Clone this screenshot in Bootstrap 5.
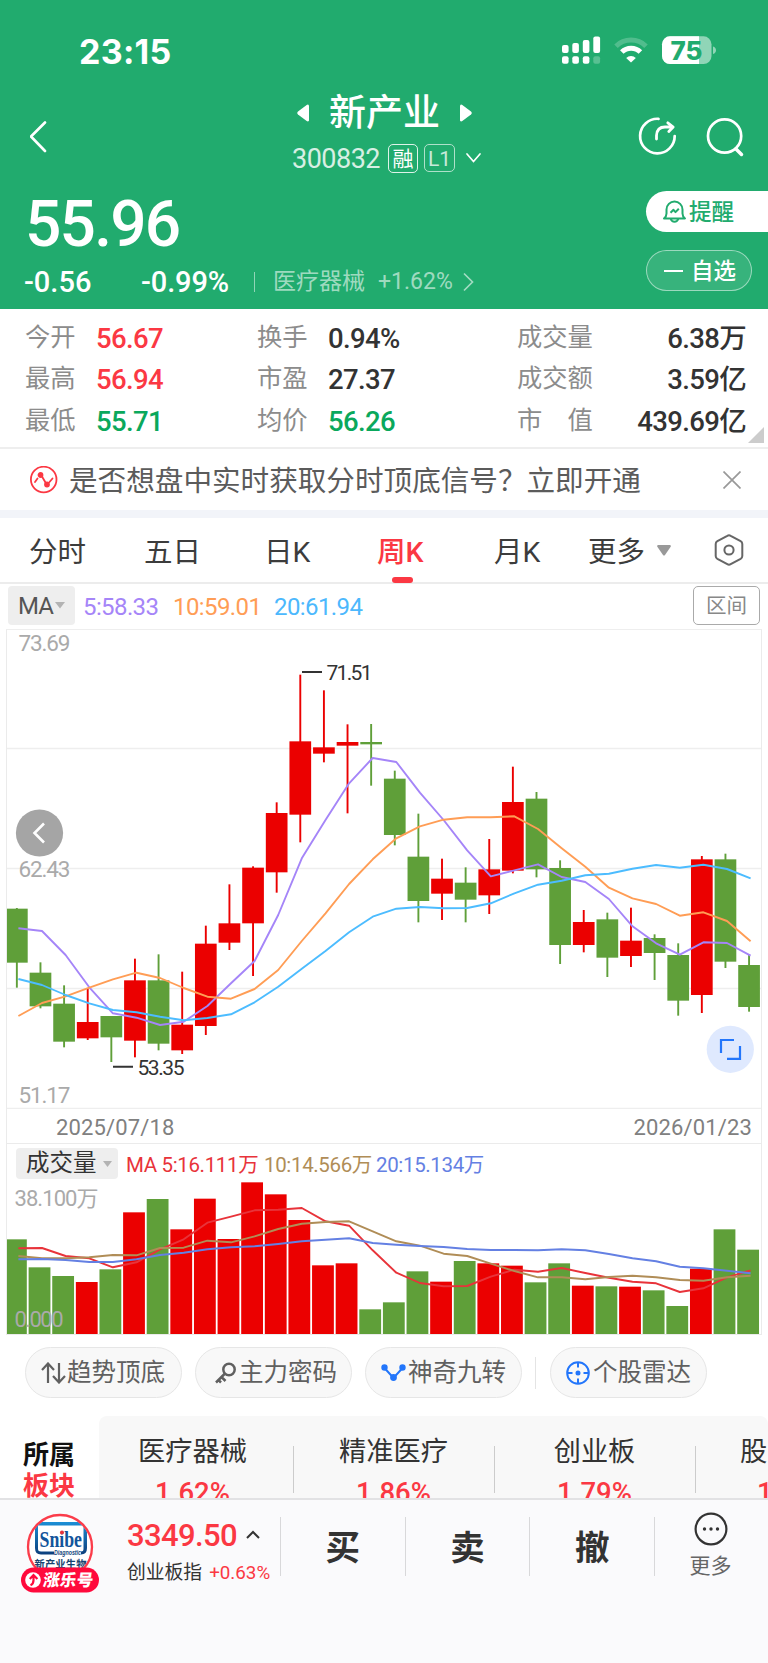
<!DOCTYPE html>
<html lang="zh-CN">
<head>
    <meta charset="UTF-8">
    <meta name="viewport" content="width=device-width, initial-scale=1.0">
    <title>新产业 300832</title>
    <link rel="stylesheet" href="https://cdn.jsdelivr.net/npm/bootstrap@5.3.0/dist/css/bootstrap.min.css">
    <style>
        body { width: 768px; height: 1663px; overflow: hidden; background: #fff; color: #333; font-family: Roboto, "Noto Sans CJK SC", sans-serif; }
        svg { display: block; flex: none; }
        .red { color: #fb3843; }
        .green { color: #0aa85c; }

        .top { height: 309px; background: #21ab6e; color: #fff; }
        .status { height: 70px; padding: 33px 0 0 79px; }
        .clock { font: 700 34px/37px Inter, sans-serif; letter-spacing: .3px; width: 483px; }
        .title-bar { height: 120px; padding-left: 30px; }
        .title-mid { width: 334px; margin-left: 170px; padding-top: 20px; }
        .stock-name { font-size: 37px; line-height: 44px; padding-top: 2px; font-weight: 500; margin: 0 20px 0 20px; }
        .code { font-size: 27px; line-height: 29px; padding-top: 3px; letter-spacing: -.5px; opacity: .82; width: 95px; }
        .tag { height: 29px; border: 1px solid rgba(255,255,255,.85); border-radius: 5px; text-align: center; }
        .quote { height: 119px; }
        .price { font-size: 64px; line-height: 64px; font-weight: 500; letter-spacing: -1.8px; padding-left: 25px; margin-top: 3px; }
        .change { font-size: 29px; line-height: 32px; font-weight: 500; margin-top: 9px; padding-left: 24px; }
        .sector { color: rgba(255,255,255,.58); font-size: 23px; font-weight: 400; }
        .pill { height: 41px; font-size: 22.5px; font-weight: 500; line-height: 41px; }
        .remind { width: 122px; padding-left: 17px; background: #fff; color: #21ab6e; border-radius: 21px 0 0 21px; }
        .watch { width: 106px; padding-left: 17px; margin-top: 18px; background: rgba(255,255,255,.1); border: 1px solid rgba(255,255,255,.5); border-radius: 21px; line-height: 38px; }

        .stats { height: 138px; padding: 8px 22px 0 25px; }
        .stat { height: 41.3px; line-height: 42px; }
        .stat .k { color: #8c8c8c; font-size: 25.3px; line-height: 41px; }
        .stat .v { font-size: 27.5px; font-weight: 500; letter-spacing: -.65px; padding-top: 1px; }
        .fold { right: 4px; bottom: 4px; }

        .promo { height: 63px; border-top: 2px solid #eee; padding: 0 27px 0 30px; color: #5b5b5b; font-size: 28.6px; line-height: 60px; }
        .gap-band { height: 8px; background: #f2f4f9; }
        .periods { height: 66px; border-bottom: 2px solid #ececec; font-size: 28.5px; line-height: 64px; color: #3c3c3c; padding-left: 29px; }
        .periods span { display: block; white-space: nowrap; padding-top: 3px; height: 64px; }
        .periods .on { color: #fb3843; font-weight: 500; position: relative; }
        .periods .on::after { content: ""; position: absolute; left: 15px; bottom: -1px; width: 21px; height: 6px; border-radius: 3px; background: #fb3843; }

        .ma { height: 45px; padding: 2px 8px 4px; font-size: 24px; line-height: 42px; letter-spacing: -.6px; }
        .pick { background: #eee; border-radius: 4px; }
        .range { width: 67px; border: 1px solid #aaa; border-radius: 5px; color: #888; font-size: 20.5px; line-height: 39px; letter-spacing: 0; }
        .kline { margin: 0 6px; border: 1px solid #ebebeb; border-top-color: #eee; height: 706px; }
        .dates { height: 35px; border-bottom: 1px solid #ebebeb; color: #808080; font-size: 22px; line-height: 37px; letter-spacing: .15px; padding: 0 9px 0 49px; }
        .volhead { height: 38px; padding: 4px 0 0 9px; font-size: 20.5px; line-height: 34px; white-space: nowrap; letter-spacing: -.35px; }
        .volhead .pick { width: 102px; height: 31px; font-size: 23.5px; line-height: 31px; letter-spacing: 0; padding-left: 10px; }

        .tools { height: 81px; padding: 12px 0 0 25px; }
        .tool { width: 157px; height: 51px; border: 1px solid #e6e6e6; border-radius: 26px; background: #f8f8f8; color: #606060; font-size: 24.5px; line-height: 51px; padding-left: 15px; }

        .plates { height: 82px; overflow: hidden; }
        .plates-name { width: 99px; padding: 24px 0 0 23px; font-size: 26px; line-height: 31px; font-weight: 700; color: #111; }
        .plate-list { width: 669px; background: #f8f8f8; border-radius: 8px 8px 0 0; overflow: hidden; }
        .plate { flex: none; width: 201px; text-align: center; position: relative; padding: 18px 14px 0 0; font-size: 27.2px; line-height: 36px; color: #333; }
        .plate b { display: block; font-weight: 500; font-size: 27.5px; line-height: 46px; color: #fb3843; }
        .plate::after { content: ""; position: absolute; right: 6px; top: 30px; width: 1px; height: 47px; background: #ccc; }
        .plate.cut { text-align: left; padding-left: 38px; }

        .dock { height: 165px; background: #fafafc; border-top: 2px solid #e2e2e4; }
        .idx { width: 153px; padding-top: 19px; }
        .idx-num { font-size: 31px; line-height: 34px; font-weight: 500; letter-spacing: -.6px; }
        .idx-name { font-size: 18.8px; line-height: 24px; margin-top: 8px; }
        .act { width: 124.7px; height: 59px; margin-top: 17px; border-left: 1px solid #d8d8da; font-size: 34.5px; line-height: 62px; font-weight: 700; text-align: center; }
        .more { width: 111px; height: 76px; border-left: 0; color: #666; font-size: 21px; }
    </style>
</head>
<body>
    <header class="top">
        <div class="status d-flex">
            <div class="clock">23:15</div>
            <svg width="160" height="34" viewBox="562 34 160 34" fill="#fff">
                <rect x="562" y="46" width="6.6" height="8" rx="2"/><rect x="572.3" y="44" width="6.6" height="10" rx="2"/><rect x="582.8" y="41" width="6.6" height="13" rx="2"/><rect x="593.3" y="37.5" width="6.8" height="16.5" rx="2"/>
                <rect x="562" y="57.3" width="6.6" height="7.4" rx="2"/><rect x="572.3" y="57.3" width="6.6" height="7.4" rx="2"/><rect x="582.8" y="57.3" width="6.6" height="7.4" rx="2"/><rect x="593.3" y="57.3" width="6.8" height="7.4" rx="2" opacity=".25"/>
                <g fill="none" stroke="#fff"><path d="M616 47.2a21.5 21.5 0 0 1 30 0" stroke-width="5" opacity=".22"/><path d="M621.8 53a13.2 13.2 0 0 1 18.6 0" stroke-width="5"/></g>
                <path d="M631 63.5l-4.8-4.6a6.8 6.8 0 0 1 9.6 0z"/>
                <rect x="662" y="37.3" width="49.5" height="27.8" rx="8" opacity=".5"/>
                <path d="M670 37.3h29v27.8h-29a8 8 0 0 1-8-8v-11.8a8 8 0 0 1 8-8z"/>
                <path d="M713 47.5q3 1 3 3.8t-3 3.8z" opacity=".5"/>
                <text x="686.5" y="60.500" text-anchor="middle" font-family="Inter, sans-serif" font-size="25.5" font-weight="800" fill="#21ab6e" textLength="32" lengthAdjust="spacingAndGlyphs">75</text>
            </svg>
        </div>
        <div class="title-bar d-flex">
            <svg width="17" height="120" viewBox="30 70 17 120" fill="none" stroke="#fff" stroke-width="2.6" stroke-linecap="round" stroke-linejoin="round"><path d="M45 122.5L31 136.5L45 151"/></svg>
            <div class="title-mid">
                <div class="d-flex align-items-center" style="padding-left: 80px">
                    <svg width="12" height="18" viewBox="0 0 12 18" fill="#fff"><path d="M12 1.5v15q-.8 1.5-2.3.5L1 10.5Q-.5 9 1 7.5L9.7 1q1.5-1 2.3.5z"/></svg>
                    <span class="stock-name">新产业</span>
                    <svg width="12" height="18" viewBox="0 0 12 18" fill="#fff"><path d="M0 1.5v15q.8 1.5 2.3.5L11 10.5q1.5-1.5 0-3L2.3 1Q.8 0 0 1.5z"/></svg>
                </div>
                <div class="d-flex align-items-center" style="padding-left: 75px; margin-top: 6px">
                    <span class="code">300832</span>
                    <span class="tag" style="width: 30px; margin-left: 1px; font-size: 21px; line-height: 28px">融</span>
                    <span class="tag opacity-75" style="width: 31px; height: 28px; margin-left: 6px; font-size: 21px; line-height: 28px">L1</span>
                    <svg class="ms-2" width="22" height="12" viewBox="0 0 22 12" fill="none" stroke="#fff" stroke-width="1.7" stroke-linecap="round"><path d="M4 2L10.5 9.5L17 2"/></svg>
                </div>
            </div>
            <svg width="130" height="120" viewBox="628 70 130 120" style="margin-left: 77px" fill="none" stroke="#fff" stroke-width="2.7" stroke-linecap="round" stroke-linejoin="round">
                <path d="M658.5 118.8A17.3 17.3 0 1 0 674.7 136"/><path d="M656.5 139V135.5Q657 127 665 127H672M667.8 122.8L673.2 127L668.8 131.5" stroke-width="2.8"/>
                <circle cx="724.6" cy="136" r="16.6"/><path d="M736 149L741.5 154.5" stroke-width="3.5"/>
            </svg>
        </div>
        <div class="quote d-flex justify-content-between">
            <div>
                <div class="price">55.96</div>
                <div class="change d-flex align-items-center">
                    <span style="width: 117px">-0.56</span>
                    <span style="width: 113px; letter-spacing: -.1px">-0.99%</span>
                    <span class="sector d-flex align-items-center"><i style="width: 1px; height: 20px; background: rgba(255,255,255,.5); margin-right: 18px"></i>医疗器械<span style="margin-left: 13px">+1.62%</span>
                        <svg width="12" height="20" viewBox="0 0 12 20" style="margin-left: 9px" fill="none" stroke="currentColor" stroke-width="1.7"><path d="M2 1.5L10.5 10L2 18.5"/></svg></span>
                </div>
            </div>
            <div style="width: 122px; padding-top: 1px">
                <div class="pill remind d-flex align-items-center">
                    <svg width="24" height="26" viewBox="0 0 24 26" fill="none" stroke="#21ab6e" stroke-width="2" stroke-linejoin="round"><path d="M1 19.5Q3.5 17.5 3.5 14.5V10.5a8 8 0 0 1 16 0v4q0 3 2.5 5zM7.5 19.5q1.2 3.3 4 3.3t4-3.3M7.5 13.800l3-3 2 2.300 3.300-3.300"/></svg>
                    <span style="margin-left: 2px; padding-top: 2px">提醒</span>
                </div>
                <div class="pill watch d-flex align-items-center">
                    <i style="width: 19px; height: 2px; background: #fff; margin-right: 8px"></i>自选
                </div>
            </div>
        </div>
    </header>

    <section class="stats d-flex position-relative">
        <div style="width: 232px">
            <div class="stat d-flex"><span class="k" style="width: 71px">今开</span><span class="v red">56.67</span></div>
            <div class="stat d-flex"><span class="k" style="width: 71px">最高</span><span class="v red">56.94</span></div>
            <div class="stat d-flex"><span class="k" style="width: 71px">最低</span><span class="v green">55.71</span></div>
        </div>
        <div style="width: 260px">
            <div class="stat d-flex"><span class="k" style="width: 71px">换手</span><span class="v">0.94%</span></div>
            <div class="stat d-flex"><span class="k" style="width: 71px">市盈</span><span class="v">27.37</span></div>
            <div class="stat d-flex"><span class="k" style="width: 71px">均价</span><span class="v green">56.26</span></div>
        </div>
        <div class="flex-grow-1">
            <div class="stat d-flex justify-content-between"><span class="k">成交量</span><span class="v">6.38万</span></div>
            <div class="stat d-flex justify-content-between"><span class="k">成交额</span><span class="v">3.59亿</span></div>
            <div class="stat d-flex justify-content-between"><span class="k">市　值</span><span class="v">439.69亿</span></div>
        </div>
        <svg class="fold position-absolute" width="16" height="16" viewBox="0 0 16 16" fill="#ccc"><path d="M16 0v16H0z"/></svg>
    </section>

    <section class="promo d-flex align-items-center">
        <svg width="28" height="28" viewBox="0 0 28 28" fill="none" stroke="#fb3843" stroke-width="1.8"><circle cx="13.7" cy="13.5" r="12.8"/><path d="M5 16l2.500-3.500M12 10.500l3.500 6M19.500 16l3-3.500" stroke-linecap="round"/><circle cx="10.5" cy="9" r="2" fill="#fb3843"/><circle cx="17" cy="18.500" r="2" fill="#fb3843"/></svg>
        <span class="text-nowrap" style="margin-left: 11px; padding-top: 2px">是否想盘中实时获取分时顶底信号？立即开通</span>
        <svg class="ms-auto" width="18" height="18" viewBox="0 0 18 18" stroke="#999" stroke-width="1.7"><path d="M.5.5l17 17M17.5.5l-17 17"/></svg>
    </section>
    <div class="gap-band"></div>

    <nav class="periods d-flex align-items-center">
        <span style="width: 115px">分时</span>
        <span style="width: 120px">五日</span>
        <span style="width: 113px">日K</span>
        <span class="on" style="width: 117px">周K</span>
        <span style="width: 94px">月K</span>
        <span>更多</span>
        <svg width="14" height="11" viewBox="0 0 14 11" style="margin-left: 12px" fill="#999"><path d="M1 0h12q1.500.5.500 2L8 10q-1 1.200-2 0L.5 2Q-.5.500 1 0z"/></svg>
        <svg width="30" height="32" viewBox="0 0 30 32" style="margin-left: 43px" fill="none" stroke="#666" stroke-width="2"><path d="M13.3 1.800q1.700-1 3.400 0l9.900 5.400q1.700 1 1.700 2.900v11.800q0 1.900-1.700 2.900l-9.900 5.400q-1.700 1-3.400 0l-9.900-5.400q-1.700-1-1.700-2.900V10.100q0-1.900 1.700-2.900z"/><circle cx="15" cy="16" r="4.6"/></svg>
    </nav>

    <div class="ma d-flex">
        <div class="pick d-flex align-items-center" style="width: 67px; padding-left: 10px; margin-right: 8px; letter-spacing: -1px; color: #555">MA
            <svg width="10" height="7" viewBox="0 0 10 7" style="margin-left: 2px" fill="#b3b3b3"><path d="M0 0h10L5 6.5z"/></svg>
        </div>
        <span style="width: 90px; color: #a585f8">5:58.33</span>
        <span style="width: 101px; color: #ff9d55">10:59.01</span>
        <span style="color: #4cb8fd">20:61.94</span>
        <div class="range ms-auto text-center">区间</div>
    </div>

    <section class="kline">
        <svg id="candles" width="754" height="479" viewBox="7 10 754 479">
            <path d="M7 128.5H761M7 248.5H761M7 368.5H761M7 488.5H761" stroke="#eee" stroke-width="1.3"/>
            <g fill="#aaa" font-size="22.5">
                <text x="18.5" y="31" textLength="52">73.69</text>
                <text x="18.5" y="257" textLength="52">62.43</text>
                <text x="18.5" y="483" textLength="52">51.17</text>
            </g>
        </svg>
        <div class="dates d-flex justify-content-between"><span>2025/07/18</span><span>2026/01/23</span></div>
        <div class="volhead d-flex">
            <div class="pick d-flex align-items-center">成交量
                <svg width="9" height="6" viewBox="0 0 9 6" style="margin-left: 6px" fill="#b3b3b3"><path d="M0 0h9L4.5 6z"/></svg>
            </div>
            <span style="width: 138px; margin-left: 8px; color: #e8333a">MA 5:16.111万</span>
            <span style="width: 112px; color: #b08d57">10:14.566万</span>
            <span style="color: #6480e3">20:15.134万</span>
        </div>
        <svg id="volume" width="754" height="153" viewBox="7 82 754 153"></svg>
    </section>

    <section class="tools d-flex">
        <div class="tool d-flex align-items-center">
            <svg width="25" height="22" viewBox="0 0 25 22" fill="none" stroke="#606060" stroke-width="2.2"><path d="M7 21V2M1 8l6-6.5L13 8M18 1v19M12 14l6 6.5 6-6.5"/></svg><span class="text-nowrap" style="margin-left: 1px">趋势顶底</span>
        </div>
        <div class="tool d-flex align-items-center" style="margin-left: 13px; padding-left: 19px">
            <svg width="22" height="22" viewBox="0 0 22 22" fill="none" stroke="#606060" stroke-width="2.5"><circle cx="14" cy="7.5" r="5.7"/><path d="M10 11.500L1 20.500M6.500 15l4 4M3.500 18l2.500 2.500"/></svg><span class="text-nowrap" style="margin-left: 2px">主力密码</span>
        </div>
        <div class="tool d-flex align-items-center" style="margin-left: 13px">
            <svg width="25" height="18" viewBox="0 0 25 18" fill="#2376fb" stroke="#2376fb" stroke-width="2"><path d="M3.500 4l9 10 9-10" fill="none"/><circle cx="3.500" cy="3.500" r="2.200"/><circle cx="12.500" cy="13.500" r="2.400"/><circle cx="21.500" cy="3.500" r="2.200"/></svg><span class="text-nowrap" style="margin-left: 2px">神奇九转</span>
        </div>
        <i style="width: 1px; height: 32px; margin: 10px 14px 0 13px; background: #e4e4e4"></i>
        <div class="tool d-flex align-items-center">
            <svg width="24" height="24" viewBox="0 0 24 24" fill="none" stroke="#2376fb" stroke-width="2"><circle cx="12" cy="12" r="10.8"/><path d="M12 1v5.500M12 17.500V23M1 12h5.500M17.500 12H23"/><circle cx="12" cy="12" r="1.5" fill="#2376fb"/></svg><span class="text-nowrap" style="margin-left: 3px">个股雷达</span>
        </div>
    </section>

    <section class="plates d-flex">
        <div class="plates-name">所属<br><span class="red">板块</span></div>
        <div class="plate-list d-flex">
            <div class="plate">医疗器械<b>1.62%</b></div>
            <div class="plate">精准医疗<b>1.86%</b></div>
            <div class="plate">创业板<b>1.79%</b></div>
            <div class="plate cut">股<b style="padding-left: 17px">1</b></div>
        </div>
    </section>

    <footer class="dock d-flex">
        <svg width="127" height="110" viewBox="0 1500 127 110">
            <defs>
                <clipPath id="round"><circle cx="60" cy="1547" r="31"/></clipPath>
                <linearGradient id="blue" x1="0" x2="0" y1="0" y2="1"><stop offset="0" stop-color="#1c8fd6"/><stop offset="1" stop-color="#0c3f7c"/></linearGradient>
            </defs>
            <circle cx="60" cy="1547" r="31" fill="#fff"/>
            <g clip-path="url(#round)">
                <path d="M35 1522H87V1525.5H38V1549Q38 1551.5 41 1551.5H54V1554.5H41Q35 1554.5 35 1548zM83.5 1525H87V1548Q87 1554.5 81 1554.5V1551.5Q83.5 1551.5 83.5 1549z" fill="url(#blue)"/>
                <text x="39.5" y="1547" font-family="Liberation Serif, serif" font-size="24" font-weight="700" fill="#13559b" textLength="42.5" lengthAdjust="spacingAndGlyphs">Snibe</text>
                <circle cx="62" cy="1532.5" r="2" fill="#e8333a"/>
                <text x="54" y="1554.5" font-family="Liberation Sans, sans-serif" font-size="6.8" font-weight="700" font-style="italic" fill="#164a80" textLength="27" lengthAdjust="spacingAndGlyphs">Diagnostic</text>
                <text x="34.5" y="1567.5" font-size="10.3" font-weight="700" fill="#15436f" textLength="52">新产业生物</text>
            </g>
            <circle cx="60" cy="1547" r="32" fill="none" stroke="#fb3c4a" stroke-width="2.3"/>
            <rect x="21" y="1567.5" width="78" height="25" rx="12.5" fill="#ff0a3c"/>
            <circle cx="33" cy="1580" r="7.8" fill="#fff"/>
            <path d="M30.500 1585.300q3-1.300 3-5v-4.500M29.800 1579l3.700-4 3.900 4" fill="none" stroke="#ff0a3c" stroke-width="2.2"/>
            <text x="0" y="0" transform="translate(42.5 1586) skewX(-8)" font-size="16.5" font-weight="900" fill="#fff" textLength="50">涨乐号</text>
        </svg>
        <div class="idx">
            <div class="idx-num red d-flex align-items-center">3349.50
                <svg width="14" height="9" viewBox="0 0 14 9" style="margin-left: 9px; margin-bottom: 3px" fill="none" stroke="#333" stroke-width="2"><path d="M1 8l6-6 6 6"/></svg>
            </div>
            <div class="idx-name text-nowrap">创业板指<span class="red" style="margin-left: 7px">+0.63%</span></div>
        </div>
        <div class="act">买</div>
        <div class="act">卖</div>
        <div class="act">撤</div>
        <div style="border-left: 1px solid #d8d8da; height: 59px; margin-top: 17px"></div>
        <div class="more text-center" style="padding-top: 12px">
            <svg class="mx-auto" width="34" height="34" viewBox="0 0 34 34" fill="#333"><circle cx="17" cy="17" r="15.4" fill="none" stroke="#333" stroke-width="2.2"/><circle cx="10.5" cy="17" r="1.7"/><circle cx="17" cy="17" r="1.7"/><circle cx="23.5" cy="17" r="1.7"/></svg>
            <div style="margin-top: 5px">更多</div>
        </div>
    </footer>

    <script src="https://cdn.jsdelivr.net/npm/bootstrap@5.3.0/dist/js/bootstrap.bundle.min.js"></script>
    <script>
        // heights are in thirds of a pixel
        const step = 23.62;
        const RED = "#eb0000";
        const GREEN = "#5f9f39";

        // colour, body top, body bottom, high, low
        const weeks = [
            ["g", 866, 1028, 864, 1103], ["g", 1058, 1159, 1027, 1165], ["g", 1151, 1265, 1096, 1282], ["r", 1206, 1255, 1105, 1260],
            ["g", 1188, 1252, 1188, 1326], ["r", 1081, 1262, 1016, 1312], ["g", 1081, 1271, 1003, 1291], ["r", 1214, 1291, 1055, 1302],
            ["r", 971, 1218, 917, 1245], ["r", 910, 968, 793, 990], ["r", 743, 910, 739, 1068], ["r", 579, 757, 547, 818],
            ["r", 364, 584, 164, 667], ["r", 382, 401, 211, 427], ["r", 366, 377, 313, 580], ["g", 366, 373, 312, 497],
            ["g", 476, 645, 452, 676], ["g", 710, 843, 581, 907], ["r", 776, 821, 716, 900], ["g", 788, 839, 742, 907],
            ["r", 748, 826, 657, 882], ["r", 546, 752, 440, 760], ["g", 536, 748, 516, 772], ["g", 744, 975, 721, 1032],
            ["r", 906, 975, 870, 997], ["g", 898, 1013, 878, 1071], ["r", 962, 1008, 863, 1041], ["g", 954, 999, 943, 1080],
            ["g", 1005, 1142, 970, 1187], ["r", 718, 1125, 708, 1179], ["g", 718, 1025, 701, 1044], ["g", 1035, 1161, 1005, 1175]
        ];
        const volumes = [418, 502, 528, 546, 508, 337, 297, 388, 296, 417, 247, 283, 360, 496, 490, 628, 607, 514, 545, 483, 490, 497, 547, 490, 557, 559, 560, 571, 618, 506, 388, 449];

        const priceLines = {
            "#a585f8": [925, 933, 1005, 1102, 1180, 1193, 1215, 1205, 1158, 1090, 1023, 885, 715, 600, 490, 414, 426, 518, 600, 691, 769, 751, 733, 771, 786, 837, 919, 970, 1004, 967, 969, 1007],
            "#ff9d55": [1188, 1149, 1129, 1103, 1078, 1058, 1074, 1104, 1130, 1136, 1107, 1050, 963, 880, 792, 718, 655, 619, 599, 592, 592, 589, 627, 685, 740, 803, 835, 852, 887, 877, 903, 964],
            "#4cbcff": [1077, 1095, 1125, 1150, 1170, 1177, 1190, 1201, 1194, 1183, 1147, 1100, 1046, 993, 937, 890, 866, 861, 865, 864, 850, 820, 794, 782, 766, 761, 746, 735, 743, 734, 747, 775]
        };
        const volumeLines = {
            "#e8333a": [445, 444, 468, 475, 502, 487, 448, 418, 368, 350, 331, 329, 324, 364, 377, 451, 518, 549, 559, 558, 530, 509, 515, 504, 519, 533, 545, 550, 576, 565, 532, 511],
            "#b08d57": [468, 475, 475, 472, 465, 466, 444, 443, 422, 427, 409, 387, 371, 366, 364, 394, 424, 437, 461, 468, 491, 513, 532, 532, 538, 531, 527, 532, 540, 542, 532, 527],
            "#6480e3": [478, 477, 480, 486, 486, 478, 465, 458, 448, 442, 439, 432, 424, 419, 415, 429, 434, 438, 441, 447, 450, 450, 451, 448, 451, 462, 475, 484, 500, 505, 512, 520]
        };

        function drawLines(lines) {
            let out = "";
            for (const color in lines) {
                const points = lines[color].map((v, i) => `${(18.4 + i * step).toFixed(1)},${(v / 3).toFixed(1)}`).join(" ");
                out += `<polyline points="${points}" fill="none" stroke="${color}" stroke-width="1.9" stroke-linejoin="round"/>`;
            }
            return out;
        }

        let html = "";
        weeks.forEach(([c, top, bottom, high, low], i) => {
            const x = 16.8 + i * step;
            const fill = c === "r" ? RED : GREEN;
            html += `<rect x="${x - 0.9}" y="${high / 3}" width="1.9" height="${(low - high) / 3}" fill="${fill}"/>`;
            html += `<rect x="${x - 10.8}" y="${top / 3}" width="21.7" height="${(bottom - top) / 3}" fill="${fill}"/>`;
        });
        html += drawLines(priceLines);
        html += `<g stroke="#333" stroke-width="2"><path d="M302 52H322M113 446.8H133"/></g>
            <g fill="#333" font-size="21"><text x="326.5" y="59.5" textLength="46">71.51</text><text x="137.5" y="454.6" textLength="47">53.35</text></g>
            <circle cx="39.5" cy="213" r="23.6" fill="#a5a5a5"/>
            <path d="M44 203.5L34.5 213L44 222.5" fill="none" stroke="#fff" stroke-width="2.6"/>
            <circle cx="730.3" cy="429.3" r="23.6" fill="#dfe9fe"/>
            <path d="M721 433V420H734M740 426V438.8H727" fill="none" stroke="#2376fb" stroke-width="2.2"/>`;
        document.getElementById("candles").innerHTML += html;

        html = `<text x="14.5" y="105.5" fill="#aaa" font-size="22" textLength="84">38.100万</text>`;
        volumes.forEach((v, i) => {
            html += `<rect x="${15.9 + i * step - 10.9}" y="${v / 3}" width="21.8" height="${(702 - v) / 3}" fill="${weeks[i][0] === "r" ? RED : GREEN}"/>`;
        });
        html += drawLines(volumeLines);
        html += `<text x="14.5" y="227" fill="#aaa" font-size="22" textLength="49">0.000</text>`;
        document.getElementById("volume").innerHTML = html;
    </script>
</body>
</html>
